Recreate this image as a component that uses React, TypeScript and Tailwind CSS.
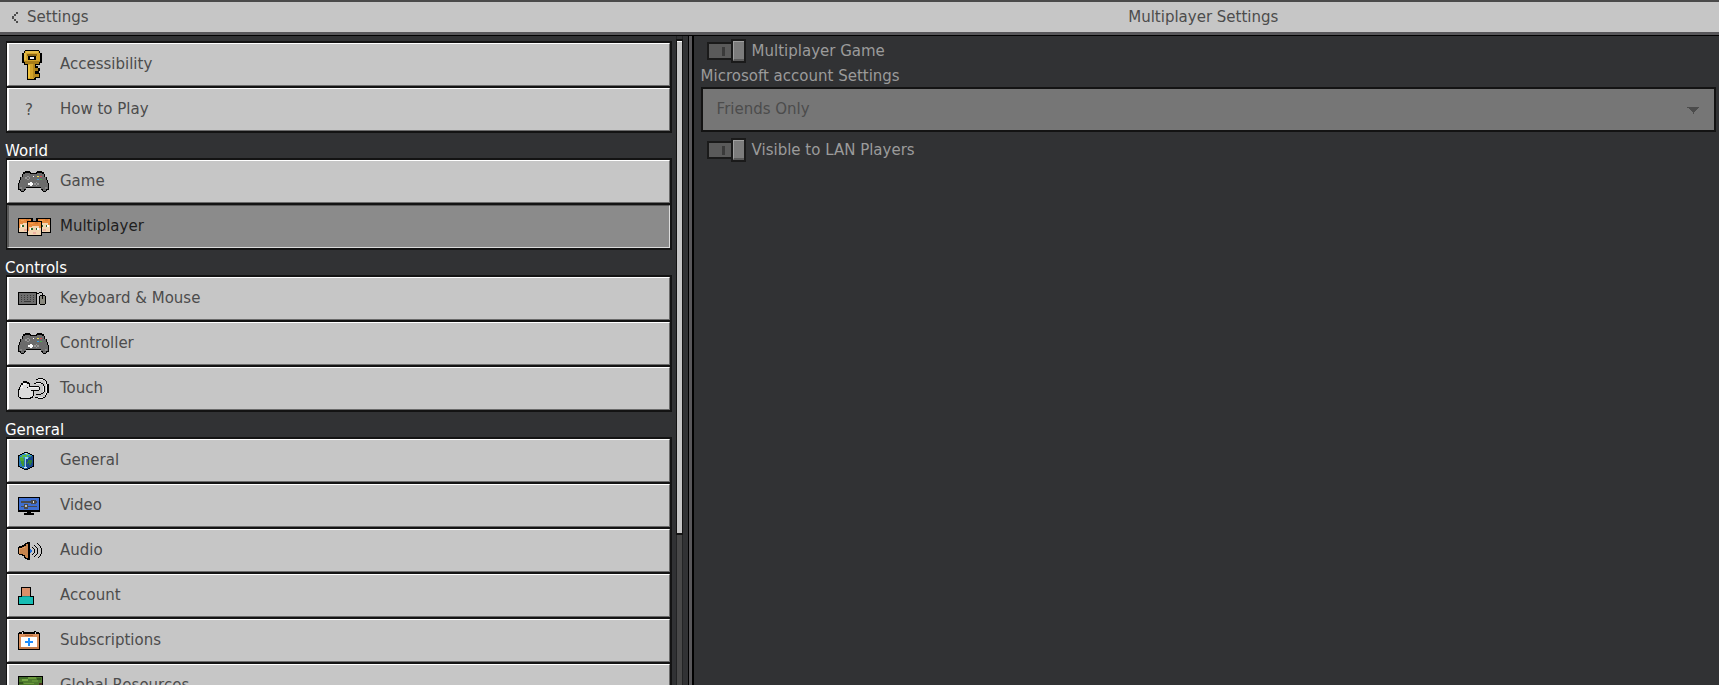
import { useState } from 'react'
import type { ReactNode } from 'react'

// [x, y, width, height, colour]
type Px = [number, number, number, number, string]

const K = '#000000'

function Pixels({ w, h, px, children }: { w: number; h: number; px: Px[]; children?: ReactNode }) {
  return (
    <svg width={w} height={h} viewBox={`0 0 ${w} ${h}`} shapeRendering="crispEdges" aria-hidden="true">
      {children}
      {px.map(([x, y, pw, ph, fill], i) => (
        <rect key={i} x={x} y={y} width={pw} height={ph} fill={fill} />
      ))}
    </svg>
  )
}

function KeyIcon() {
  return (
    <Pixels
      w={24}
      h={30}
      px={[
        [7, 0, 14, 15, K], [6, 1, 16, 14, K], [4, 3, 20, 10, K], [9, 14, 9, 16, K], [17, 16, 5, 12, K],
        [7, 1, 14, 13, '#d4a328'], [6, 3, 16, 9, '#d4a328'],
        [8, 1, 12, 2, '#e6bd4a'], [6, 3, 2, 7, '#e6bd4a'], [6, 11, 16, 1, '#a87c17'], [7, 12, 14, 2, '#a87c17'],
        [9, 4, 10, 2, '#8d6613'], [10, 6, 8, 4, K], [12, 7, 4, 2, '#f0f0f0'],
        [10, 14, 6, 15, '#d4a328'], [10, 15, 2, 13, '#f0c23c'], [15, 14, 2, 14, '#b5881d'],
        [17, 18, 3, 3, '#a87c17'], [20, 16, 2, 2, '#c6c6c6'], [21, 21, 1, 2, '#c6c6c6'], [17, 24, 4, 3, '#b5881d'],
      ]}
    />
  )
}

function ControllerIcon() {
  return (
    <Pixels
      w={31}
      h={21}
      px={[
        [7, 6, 5, 2, '#979797'], [9, 5, 2, 4, '#979797'], [9, 6, 2, 2, '#6b6b6b'],
        [15, 5, 1, 1, '#ffffff'], [19, 5, 2, 1, '#f2e34c'], [22, 5, 2, 1, '#e0484f'],
        [19, 8, 2, 1, '#38a4e8'], [22, 8, 2, 1, '#4caf50'],
        [10, 12, 5, 2, '#ffffff'], [12, 11, 2, 4, '#ffffff'],
        [16, 12, 5, 2, '#979797'], [18, 11, 1, 4, '#979797'], [18, 12, 1, 2, '#6b6b6b'],
        [2, 16, 2, 2, '#868686'], [27, 16, 2, 2, '#868686'],
      ]}
    >
      <path fill={K} d="M7 0H12V1H13V2H18V1H19V0H24V1H26V3H27V6H29V9H30V12H31V19H29V20H28V21H25V20H24V19H23V17H8V19H7V20H6V21H3V20H2V19H0V12H1V9H2V6H4V3H5V1H7Z" />
      <path fill="#6b6b6b" d="M7 2H12V3H19V2H24V3H26V6H28V9H29V12H30V18H28V20H25V18H23V16H8V18H6V20H3V18H1V12H2V9H3V6H5V3H7Z" />
    </Pixels>
  )
}

function face(x: number, y: number, w: number): Px[] {
  return [
    [x, y, w, 15, K],
    [x + 1, y + 1, w - 2, 13, '#f3d5b2'],
    [x + 1, y + 1, w - 2, 4, '#e88a3c'],
    [x + 3, y + 2, 3, 1, '#f3a052'],
    [x + 8, y + 1, 3, 2, '#d97b30'],
    [x + 1, y + 5, 4, 1, '#e88a3c'],
    [x + 1, y + 6, 1, 4, '#e88a3c'],
    [x + w - 3, y + 5, 2, 2, '#e88a3c'],
    [x + 3, y + 7, 1, 2, '#ffffff'],
    [x + 4, y + 7, 2, 2, '#2f6b2f'],
    [x + 9, y + 7, 1, 2, '#2f6b2f'],
    [x + 10, y + 7, 2, 2, '#ffffff'],
    [x + 6, y + 11, 3, 2, '#eeb0a0'],
  ]
}

function FacesIcon() {
  return <Pixels w={33} h={18} px={[...face(0, 0, 14), ...face(19, 0, 14), ...face(9, 3, 15), [14, 0, 1, 3, K], [18, 0, 1, 3, K]]} />
}

function KeyboardIcon() {
  const keys: Px[] = []
  for (let row = 0; row < 3; row++) {
    for (let col = 0; col < 5; col++) keys.push([3 + col * 3, 3 + row * 2, 1, 1, '#3a3a3a'])
  }
  return (
    <Pixels
      w={28}
      h={13}
      px={[
        [0, 0, 19, 13, K], [1, 1, 17, 11, '#6d6d6d'], ...keys, [6, 9, 7, 1, '#3a3a3a'], [3, 9, 1, 1, '#3a3a3a'], [15, 9, 1, 1, '#3a3a3a'],
        [19, 1, 2, 1, K], [21, 0, 3, 1, K], [24, 1, 1, 2, K],
        [22, 3, 5, 10, K], [21, 4, 7, 8, K], [22, 4, 5, 8, '#8a897f'], [24, 4, 1, 3, K],
      ]}
    />
  )
}

function TouchIcon() {
  return (
    <Pixels
      w={31}
      h={21}
      px={[
        // outer ripple
        [20, 0, 5, 1, K], [18, 1, 2, 1, K], [25, 1, 2, 1, K], [27, 2, 1, 1, K], [28, 3, 1, 3, K], [29, 6, 2, 9, K],
        [28, 15, 1, 2, K], [27, 17, 1, 2, K], [25, 19, 2, 1, K], [20, 20, 5, 1, K], [17, 19, 3, 1, K],
        [28, 6, 1, 9, '#ececec'], [27, 4, 1, 2, '#ececec'], [27, 15, 1, 2, '#ececec'], [20, 1, 5, 1, '#ececec'], [20, 19, 5, 1, '#ececec'],
        // inner ripple
        [18, 4, 5, 1, K], [16, 5, 2, 1, K], [23, 5, 2, 1, K], [25, 6, 1, 2, K], [26, 8, 1, 6, K],
        [25, 14, 1, 1, K], [23, 15, 2, 1, K], [18, 16, 5, 1, K], [18, 5, 5, 1, '#ececec'], [25, 8, 1, 6, '#ececec'],
      ]}
    >
      <path fill={K} d="M5 3H9V4H11V5H12V8H21V9H22V12H21V13H16V18H15V20H13V21H2V20H1V19H0V11H1V9H2V7H3V5H5Z" />
      <path fill="#dcdcdc" d="M5 5H9V6H11V9H21V12H15V18H14V19H12V20H3V19H1V12H2V9H3V7H5Z" />
      <path fill="#f5f5f5" d="M5 5H8V7H5ZM11 9H20V10H11ZM3 8H5V10H3Z" />
      <path fill={K} d="M9 9H10V10H9ZM13 12H16V13H13Z" />
    </Pixels>
  )
}

function GlobeIcon() {
  return (
    <Pixels
      w={16}
      h={18}
      px={[
        [4, 3, 5, 2, '#58b843'], [2, 5, 3, 1, '#58b843'], [8, 2, 3, 1, '#7fd05e'], [10, 4, 3, 1, '#4aa63a'], [7, 5, 3, 2, '#8fd8f2'],
        [7, 1, 2, 1, '#cfe9f5'], [2, 6, 4, 3, '#4aa63a'], [3, 9, 3, 3, '#3d9434'], [4, 12, 2, 2, '#3d9434'],
        [7, 7, 1, 9, '#9cc7e0'], [6, 15, 3, 1, '#cfe9f5'], [10, 8, 4, 3, '#2c7a3e'], [11, 11, 2, 2, '#2c7a3e'], [9, 10, 1, 2, '#2c7a3e'],
      ]}
    >
      <path fill={K} d="M6 0H10V1H12V2H14V3H16V15H14V16H12V17H10V18H6V17H4V16H2V15H0V3H2V2H4V1H6Z" />
      <path fill="#2f8fd0" d="M6 1H10V2H12V3H14V5H12V6H10V7H6V6H4V5H2V3H4V2H6Z" />
      <path fill="#2778b8" d="M1 4H3V5H5V6H8V17H6V16H4V15H2V14H1Z" />
      <path fill="#17468f" d="M15 4H13V5H11V6H8V17H10V16H12V15H14V14H15Z" />
    </Pixels>
  )
}

function VideoIcon() {
  return (
    <Pixels
      w={22}
      h={18}
      px={[
        [0, 0, 22, 15, K], [1, 1, 20, 12, '#3f6fd1'], [9, 15, 4, 1, K], [6, 16, 10, 2, K],
        [3, 4, 16, 2, '#4a4a4a'], [3, 9, 16, 1, '#4a4a4a'],
        [13, 3, 5, 4, '#4a4a4a'], [15, 4, 1, 2, '#e0e0e0'],
        [6, 7, 4, 5, '#4a4a4a'], [7, 8, 2, 2, '#c0c0c0'],
      ]}
    />
  )
}

function AudioIcon() {
  return (
    <Pixels
      w={24}
      h={18}
      px={[
        [12, 7, 1, 4, '#1e6fe0'], [13, 8, 1, 2, '#1e6fe0'],
        [14, 5, 1, 1, K], [15, 6, 1, 1, K], [16, 7, 1, 4, K], [15, 11, 1, 1, K], [14, 12, 1, 1, K],
        [16, 3, 1, 1, K], [17, 4, 1, 1, K], [18, 5, 1, 1, K], [19, 6, 1, 6, K], [18, 12, 1, 1, K], [17, 13, 1, 1, K], [16, 14, 1, 1, K],
        [19, 1, 1, 1, K], [20, 2, 1, 1, K], [21, 3, 1, 1, K], [22, 4, 1, 2, K], [23, 6, 1, 6, K], [22, 12, 1, 2, K], [21, 14, 1, 1, K], [20, 15, 1, 1, K],
      ]}
    >
      <path fill={K} d="M9 0H12V18H9V17H7V16H6V14H4V13H1V12H0V5H1V4H4V3H6V2H7V1H9Z" />
      <path fill="#c8844c" d="M8 2H10V16H8V15H7V13H5V12H1V6H4V5H6V4H8Z" />
      <path fill="#de9f68" d="M1 6H4V7H2V11H1ZM5 5H7V6H5Z" />
    </Pixels>
  )
}

function AccountIcon() {
  return (
    <Pixels
      w={16}
      h={18}
      px={[[3, 0, 10, 10, K], [4, 1, 8, 8, '#d98f68'], [0, 9, 16, 9, K], [1, 10, 14, 7, '#16bdb4'], [4, 9, 8, 1, '#0f8f89']]}
    />
  )
}

function SubscriptionsIcon() {
  return (
    <Pixels
      w={22}
      h={19}
      px={[
        [0, 1, 22, 18, K], [0, 1, 1, 1, '#c6c6c6'], [21, 1, 1, 1, '#c6c6c6'],
        [1, 3, 20, 15, '#d98f5c'], [3, 6, 16, 10, '#ffffff'], [7, 4, 8, 1, '#b3693a'], [1, 16, 20, 2, '#c47c4b'],
        [4, 0, 2, 1, K], [16, 0, 2, 1, K], [4, 1, 1, 2, '#d9d9d9'], [17, 1, 1, 2, '#d9d9d9'],
        [10, 7, 2, 8, '#1e8fff'], [7, 10, 8, 2, '#1e8fff'],
      ]}
    />
  )
}

function ResourcesIcon() {
  return (
    <Pixels
      w={25}
      h={20}
      px={[
        [0, 0, 25, 20, K], [1, 1, 23, 18, '#4e7a2d'],
        [1, 1, 9, 2, '#3f6a27'], [10, 1, 8, 2, '#6b9a3c'], [4, 3, 6, 2, '#73a542'], [14, 4, 6, 2, '#5f8f36'], [19, 2, 4, 2, '#365c22'],
        [1, 6, 4, 2, '#34551f'], [6, 7, 10, 1, '#6b9a3c'], [21, 7, 3, 12, '#4b3020'], [1, 9, 8, 4, '#203a17'], [9, 9, 6, 2, '#42692a'],
        [3, 13, 12, 6, '#1c2e15'],
      ]}
    />
  )
}

type Item = { label: string; icon: ReactNode }

const groups: { title?: string; items: Item[] }[] = [
  {
    items: [
      { label: 'Accessibility', icon: <KeyIcon /> },
      { label: 'How to Play', icon: <span className="pl-[7px]">?</span> },
    ],
  },
  {
    title: 'World',
    items: [
      { label: 'Game', icon: <ControllerIcon /> },
      { label: 'Multiplayer', icon: <FacesIcon /> },
    ],
  },
  {
    title: 'Controls',
    items: [
      { label: 'Keyboard & Mouse', icon: <KeyboardIcon /> },
      { label: 'Controller', icon: <ControllerIcon /> },
      { label: 'Touch', icon: <TouchIcon /> },
    ],
  },
  {
    title: 'General',
    items: [
      { label: 'General', icon: <GlobeIcon /> },
      { label: 'Video', icon: <VideoIcon /> },
      { label: 'Audio', icon: <AudioIcon /> },
      { label: 'Account', icon: <AccountIcon /> },
      { label: 'Subscriptions', icon: <SubscriptionsIcon /> },
      { label: 'Global Resources', icon: <ResourcesIcon /> },
    ],
  },
]

function Toggle({ id, label }: { id: string; label: string }) {
  return (
    <div className="flex items-center gap-[6px] pl-[6px]">
      <span className="relative flex items-center">
        <span className="flex h-[18px] w-6 items-center justify-end border-2 border-r-0 border-[#1a1a1a] bg-[#5a5a5a] pr-[6px]">
          <span className="h-[9px] w-[3px] bg-[#3a3a3a]" />
        </span>
        <span className="h-6 w-[15px] border-2 border-[#1a1a1a]">
          <span className="block h-full border-t border-l border-b-2 border-t-[#a0a0a0] border-l-[#a0a0a0] border-b-[#5a5a5a] bg-[#7c7c7c]" />
        </span>
        <input id={id} type="checkbox" defaultChecked disabled className="absolute inset-0 h-full w-full opacity-0" />
      </span>
      <label htmlFor={id}>{label}</label>
    </div>
  )
}

export default function App() {
  const [selected, setSelected] = useState('Multiplayer')

  return (
    <div className="flex h-screen flex-col overflow-hidden bg-[#313234] font-['DejaVu_Sans',sans-serif] text-[15px] leading-5">
      <header className="flex h-9 shrink-0 items-stretch border-t-2 border-b border-t-[#4a4a4a] border-b-black bg-[#c6c6c6] text-[#4c4c4c]">
        <div className="flex w-2/5 shrink-0 items-center border-b-[3px] border-[#58575a]">
          <button type="button" className="flex items-center gap-[9px] pl-3">
            <svg width="6" height="11" viewBox="0 0 6 11" shapeRendering="crispEdges" fill="#4c4c4c" aria-hidden="true">
              <path d="M4 0h2v2h-2zM2 2h2v2h-2zM0 4h2v3h-2zM2 7h2v2h-2zM4 9h2v2h-2z" />
            </svg>
            Settings
          </button>
        </div>
        <h1 className="flex grow items-center justify-center border-b-[3px] border-[#58575a]">{selected} Settings</h1>
      </header>

      <div className="flex min-h-0 grow">
        <div className="flex w-2/5 shrink-0 pr-[5px]">
          <nav className="min-w-0 grow overflow-hidden pt-[5px] pl-[6px]">
            {groups.map((group, i) => (
              <section key={i}>
                {group.title && <h2 className="-ml-px flex h-[25px] items-end leading-[14px] text-white">{group.title}</h2>}
                <ul className="flex flex-col gap-[2px] bg-[#131313] py-[2px] pr-[2px] pl-px">
                  {group.items.map((item) => (
                    <li key={item.label}>
                      <button
                        type="button"
                        onClick={() => setSelected(item.label)}
                        className={`flex h-[43px] w-full items-center border border-l-2 pl-[9px] text-left ${
                          selected === item.label
                            ? 'border-t-[#5a5a5a] border-r-[#dcdcdc] border-b-[#dcdcdc] border-l-[#5a5a5a] bg-[#8b8b8b] text-[#1e1e1e]'
                            : 'border-t-white border-r-[#6a6a6a] border-b-[#6a6a6a] border-l-white bg-[#c6c6c6] text-[#4c4c4c]'
                        }`}
                      >
                        <span className="flex w-[42px] shrink-0 items-center">{item.icon}</span>
                        <span className="pb-[2px]">{item.label}</span>
                      </button>
                    </li>
                  ))}
                </ul>
              </section>
            ))}
          </nav>
          <div className="ml-1 flex w-[7px] shrink-0 flex-col border-x border-[#222324] bg-[#484848]">
            <div className="h-[3px] bg-[#313234]" />
            <div className="-mx-px h-[76.5%] border-x border-y-2 border-[#131313] bg-[#c6c6c6]">
              <div className="h-px bg-white" />
            </div>
          </div>
        </div>

        <main className="min-w-0 grow border-l border-black">
          <div className="h-full border-l-[3px] border-[#58575a]">
            <div className="flex h-full flex-col border-l-2 border-black pt-[3px] pr-[3px] pl-[7px] text-[#9b9b9b]">
              <Toggle id="multiplayer-game" label="Multiplayer Game" />
              <label htmlFor="account-settings" className="flex h-6 items-end pb-px">
                Microsoft account Settings
              </label>
              <div className="relative mb-[6px]">
                <select
                  id="account-settings"
                  disabled
                  className="block h-[45px] w-full appearance-none border-2 border-[#131313] bg-[#767676] px-[14px] pb-px text-[#4c4c4c] opacity-100"
                >
                  <option>Friends Only</option>
                </select>
                <svg
                  width="12"
                  height="7"
                  viewBox="0 0 12 7"
                  shapeRendering="crispEdges"
                  fill="#4c4c4c"
                  aria-hidden="true"
                  className="pointer-events-none absolute top-5 right-[17px]"
                >
                  <path d="M0 0H12V1H11V2H10V3H9V4H8V5H7V7H6V5H5V4H4V3H3V2H2V1H0Z" />
                </svg>
              </div>
              <Toggle id="lan-visible" label="Visible to LAN Players" />
            </div>
          </div>
        </main>
      </div>
    </div>
  )
}
